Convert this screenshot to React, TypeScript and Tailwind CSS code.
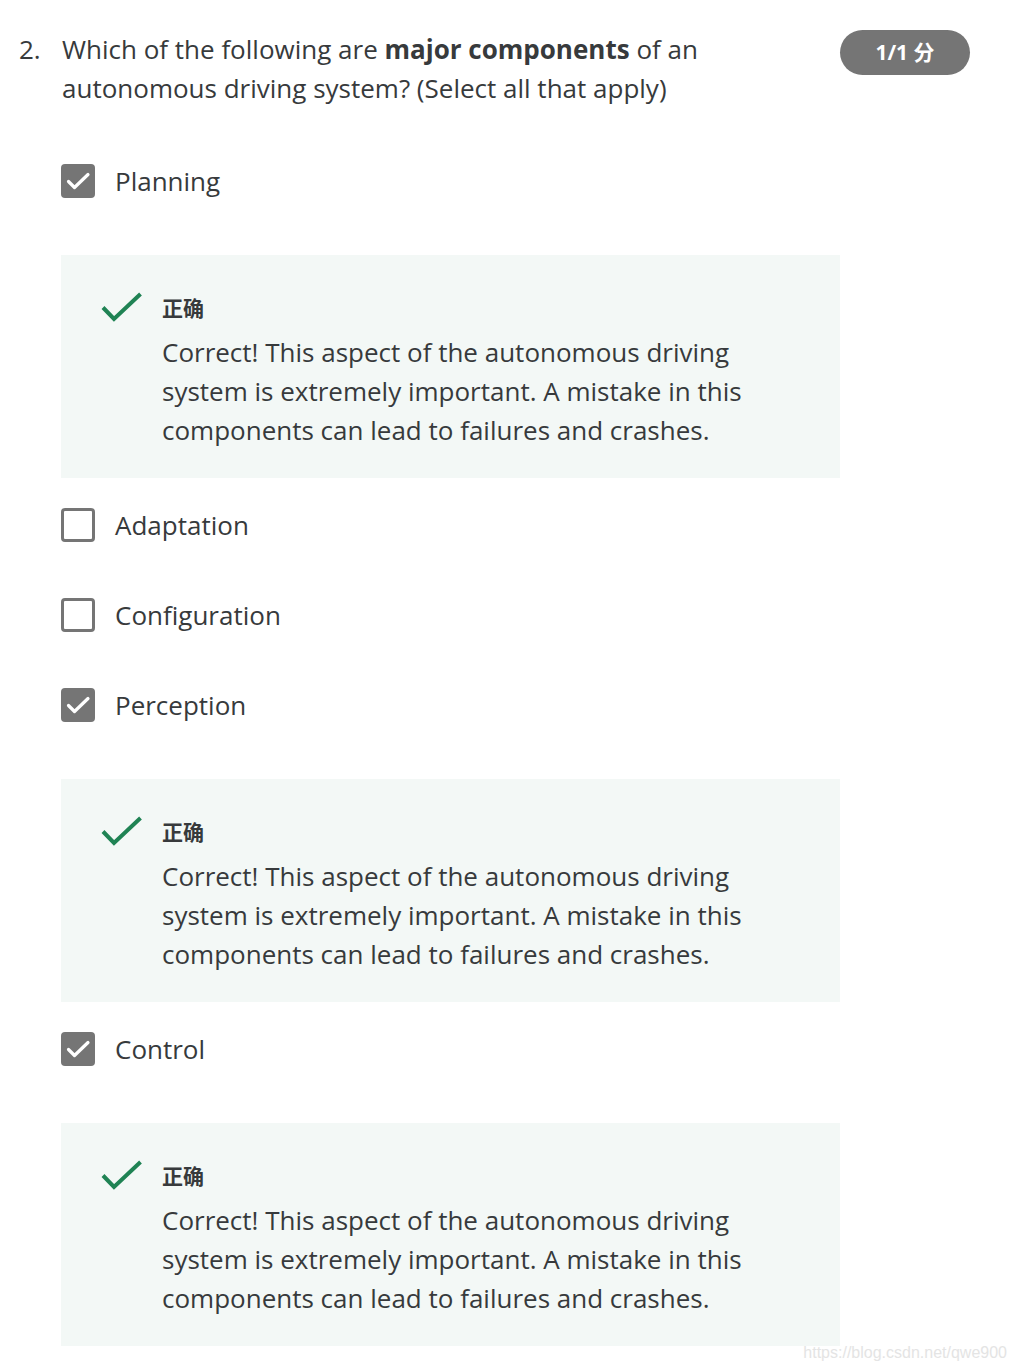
import React from "react";

type Option = { label: string; checked: boolean; feedback?: string };

const FEEDBACK =
  "Correct! This aspect of the autonomous driving system is extremely important. A mistake in this components can lead to failures and crashes.";

const options: Option[] = [
  { label: "Planning", checked: true, feedback: FEEDBACK },
  { label: "Adaptation", checked: false },
  { label: "Configuration", checked: false },
  { label: "Perception", checked: true, feedback: FEEDBACK },
  { label: "Control", checked: true, feedback: FEEDBACK },
];

function Checkbox({ checked }: { checked: boolean }) {
  if (checked) {
    return (
      <span className="flex h-[34px] w-[34px] shrink-0 items-center justify-center rounded-[4px] bg-[#757575]">
        <svg width="34" height="34" viewBox="0 0 34 34" fill="none">
          <path
            d="M7.5 17.5l6 6L27 10.5"
            stroke="#fff"
            strokeWidth="3.2"
            strokeLinecap="round"
            strokeLinejoin="round"
          />
        </svg>
      </span>
    );
  }
  return (
    <span className="h-[34px] w-[34px] shrink-0 rounded-[4px] border-[3px] border-[#757575] bg-white" />
  );
}

function Feedback({ text }: { text: string }) {
  return (
    <div className="mb-[30px] flex h-[223px] w-[779px] bg-[#f3f8f6] pl-[40px] pt-[35px]">
      <div className="w-[40px] shrink-0 pt-[2px]">
        <svg width="41" height="31" viewBox="0 0 41 31" fill="none">
          <path d="M2 15.5l11 11.5L39.5 2" stroke="#1f8354" strokeWidth="4" />
        </svg>
      </div>
      <div className="ml-[21px] flex flex-col">
        <div className="h-[36px] text-[21px] leading-[36px] font-bold text-[#373a3c]">正确</div>
        <p className="mt-[7px] w-[620px] text-[26px] leading-[39px] text-[#373a3c]">{text}</p>
      </div>
    </div>
  );
}

export default function App() {
  return (
    <div
      className="relative h-[1372px] w-[1017px] overflow-hidden bg-white text-[#373a3c]"
      style={{ fontFamily: '"Open Sans", "Noto Sans CJK SC", sans-serif' }}
    >
      {/* Question header */}
      <div className="flex items-start pl-[19px] pr-[47px] pt-[30px]">
        <div className="w-[43px] shrink-0 text-[26px] leading-[39px]">2.</div>
        <div className="w-[720px] text-[26px] leading-[39px]">
          Which of the following are <strong className="font-bold">major components</strong> of an
          autonomous driving system? (Select all that apply)
        </div>
        <div className="ml-auto flex h-[45px] w-[130px] items-center justify-center rounded-full bg-[#757575] text-[21px] font-bold text-white">
          1/1 分
        </div>
      </div>

      {/* Options */}
      <div className="ml-[61px] mt-[56px] flex flex-col">
        {options.map((opt) => (
          <div key={opt.label}>
            <div className={`flex h-[34px] items-center ${opt.feedback ? "mb-[57px]" : "mb-[56px]"}`}>
              <Checkbox checked={opt.checked} />
              <span className="ml-[20px] text-[26px] leading-[39px]">{opt.label}</span>
            </div>
            {opt.feedback && <Feedback text={opt.feedback} />}
          </div>
        ))}
      </div>

      {/* Watermark */}
      <div
        className="absolute bottom-[7px] right-[10px] text-[16px] text-[#e4e4e4]"
        style={{ fontFamily: '"Liberation Sans", Arial, sans-serif' }}
      >
        https://blog.csdn.net/qwe900
      </div>
    </div>
  );
}
